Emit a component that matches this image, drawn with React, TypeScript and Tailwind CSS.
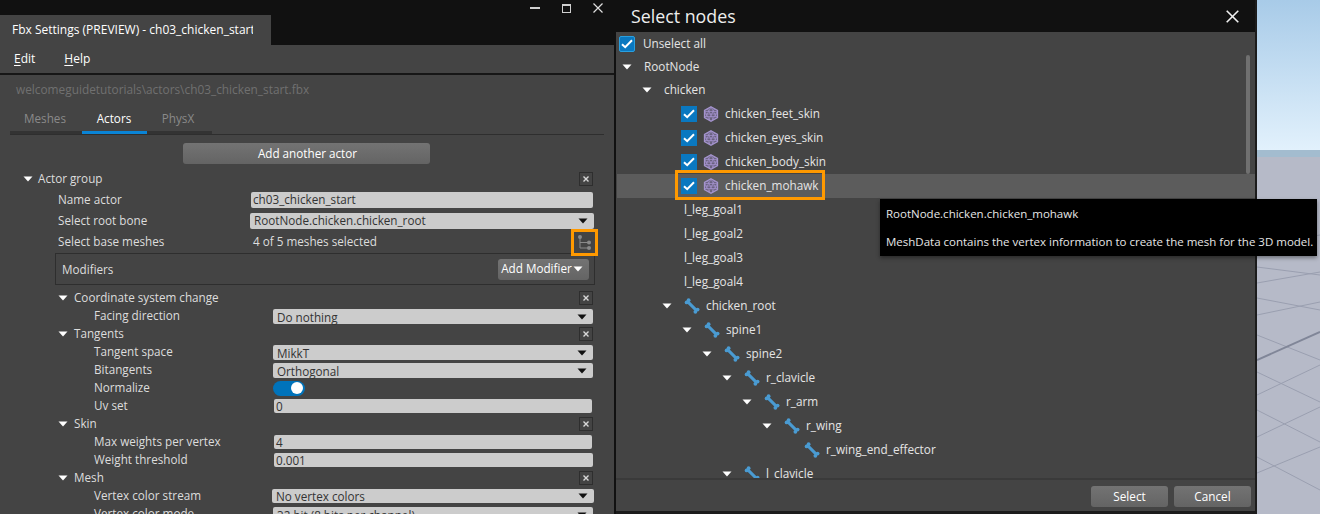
const FONT = "font-['Open_Sans',sans-serif]";

const Caret: React.FC<{ color?: string; className?: string }> = ({ color = "#ffffff", className }) => (
  <svg width="10" height="6" viewBox="0 0 10 6" className={`shrink-0 ${className ?? ""}`}>
    <path d="M0.5 0.5H9.5L5 5.5Z" fill={color} />
  </svg>
);

const SmallClose: React.FC = () => (
  <div className="flex h-[14px] w-[14px] shrink-0 items-center justify-center border border-[#2e2e2e] bg-[#444444]">
    <svg width="6" height="6" viewBox="0 0 6 6">
      <path d="M0.5 0.5L5.5 5.5M5.5 0.5L0.5 5.5" stroke="#d8d8d8" strokeWidth="1.4" />
    </svg>
  </div>
);

const Check: React.FC<{ className?: string }> = ({ className }) => (
  <div className={`flex h-4 w-4 shrink-0 items-center justify-center bg-[#0a78c0] ${className ?? ""}`}>
    <svg width="12" height="10" viewBox="0 0 12 10">
      <path d="M1 5.2L4.2 8.2L11 1.2" fill="none" stroke="#ffffff" strokeWidth="2" />
    </svg>
  </div>
);

const MeshIcon: React.FC = () => (
  <svg width="16" height="16" viewBox="0 0 16 16" className="shrink-0">
    <path d="M8 .8L14.5 4.4V11.6L8 15.2L1.5 11.6V4.4Z" fill="#6a6280" stroke="#a594cf" strokeWidth="1.3" />
    <path d="M1.5 5.5H14.5M1.5 8H14.5M1.5 10.5H14.5M4.5 2.8L10.5 14M8 1L13 10.5M2 6L7 14.5M11.5 2.8L5.5 14M8 1L3 10.5M14 6L9 14.5" fill="none" stroke="#a594cf" strokeWidth=".7" />
  </svg>
);

const BoneIcon: React.FC = () => (
  <svg width="16" height="16" viewBox="0 0 16 16" className="shrink-0">
    <path d="M3.6 3.6L12.4 12.4" stroke="#4a9bd2" strokeWidth="3" />
    <circle cx="2.6" cy="4.4" r="1.9" fill="#4a9bd2" />
    <circle cx="4.6" cy="2.2" r="1.9" fill="#4a9bd2" />
    <circle cx="11.4" cy="13.8" r="1.9" fill="#4a9bd2" />
    <circle cx="13.6" cy="11.6" r="1.9" fill="#4a9bd2" />
  </svg>
);

const TextField: React.FC<{ value: string; className: string }> = ({ value, className }) => (
  <div className={`flex items-center rounded-[2px] bg-[#cccccc] leading-[14px] text-[#333333] ${className}`}>
    {value}
  </div>
);

const SelectField: React.FC<{ value: string; className: string }> = ({ value, className }) => (
  <div className={`flex items-center justify-between rounded-[2px] bg-[#cccccc] pr-[6px] leading-[13px] text-[#333333] ${className}`}>
    <span>{value}</span>
    <Caret color="#111111" />
  </div>
);

const Section: React.FC<{ label: string }> = ({ label }) => (
  <div className="flex h-[18px] items-center pl-[58px] pr-[21px]">
    <Caret className="mr-[6px]" />
    <span className="flex-1">{label}</span>
    <SmallClose />
  </div>
);

const Prop: React.FC<{ label: string; children?: React.ReactNode }> = ({ label, children }) => (
  <div className="flex h-[18px] items-center pl-[94px] pr-[21px]">
    <span className="w-[179px] shrink-0">{label}</span>
    {children}
  </div>
);

const FbxSettings: React.FC = () => (
  <div className="flex h-full w-[614px] shrink-0 flex-col overflow-hidden bg-[#444444] text-[11.7px] text-[#dddddd]">
    <div className="relative h-[45px] shrink-0 bg-[#111111] pt-[15px]">
      <div className="flex h-[30px] w-[271px] items-center bg-[#444444] pl-[12px] text-[12px] text-white">
        <span className="w-[241px] overflow-hidden whitespace-nowrap">Fbx Settings (PREVIEW) - ch03_chicken_start</span>
      </div>
      <div className="absolute right-[11px] top-[3px] flex items-center gap-[22px]">
        <div className="h-[2px] w-[10px] bg-[#d0d0d0]" />
        <div className="h-[9px] w-[9px] border border-t-2 border-[#d0d0d0]" />
        <svg width="10" height="10" viewBox="0 0 10 10">
          <path d="M.5 .5L9.5 9.5M9.5 .5L.5 9.5" stroke="#e0e0e0" strokeWidth="1.2" />
        </svg>
      </div>
    </div>
    <div className="box-content flex h-[28px] shrink-0 items-center gap-[29px] border-b-2 border-[#161616] pl-[14px] text-[12px] text-white">
      <span><span className="underline underline-offset-2">E</span>dit</span>
      <span><span className="underline underline-offset-2">H</span>elp</span>
    </div>
    <div className="flex h-[30px] shrink-0 items-center pl-[16px] text-[11.85px] text-[#707070]">welcomeguidetutorials\actors\ch03_chicken_start.fbx</div>
    <div className="mx-[10px] h-[30px] shrink-0 border-b border-[#2e2e2e]">
      <div className="flex h-[29px] w-[202px] border-b-[3px] border-[#333333]">
        <div className="flex w-[70px] items-center justify-center pt-px text-[#8a8a8a]">Meshes</div>
        <div className="-mb-[3px] ml-[2px] flex w-[65px] items-center justify-center border-b-[3px] border-[#0a84d6] pr-px pt-px text-white">Actors</div>
        <div className="flex w-[65px] items-center justify-center pr-[3px] pt-px text-[#8a8a8a]">PhysX</div>
      </div>
    </div>
    <div className="flex shrink-0 justify-center pr-[2px] pt-[8px]">
      <div className="flex h-[21px] w-[247px] items-center justify-center rounded-[3px] bg-gradient-to-b from-[#737373] to-[#646464] pl-[3px] text-white">Add another actor</div>
    </div>
    <div className="flex h-[25px] shrink-0 items-center pl-[23px] pr-[21px] pt-[4px]">
      <Caret className="mr-[5px]" />
      <span className="flex-1">Actor group</span>
      <SmallClose />
    </div>
    <div className="flex h-[21px] shrink-0 items-center pl-[58px] pr-[21px]">
      <span className="w-[193px] shrink-0">Name actor</span>
      <TextField value="ch03_chicken_start" className="h-[16px] flex-1 pb-px pl-[2px]" />
    </div>
    <div className="flex h-[21px] shrink-0 items-center pl-[58px] pr-[20px]">
      <span className="w-[192px] shrink-0">Select root bone</span>
      <SelectField value="RootNode.chicken.chicken_root" className="h-[16px] flex-1 pl-[4px]" />
    </div>
    <div className="relative flex h-[21px] shrink-0 items-center pl-[58px] pr-[22px]">
      <span className="w-[195px] shrink-0">Select base meshes</span>
      <span>4 of 5 meshes selected</span>
      <div className="absolute left-[571px] top-[-2px] flex h-[27px] w-[27px] items-center justify-center border-[3px] border-[#ff9900]">
        <svg width="14" height="15" viewBox="0 0 14 15">
          <path d="M2 2V13H10M2 7.5H10" fill="none" stroke="#8a8a8a" />
          <circle cx="2" cy="2" r="2" fill="#8a8a8a" />
          <circle cx="11" cy="7.5" r="2" fill="#8a8a8a" />
          <circle cx="11" cy="13" r="2" fill="#8a8a8a" />
        </svg>
      </div>
    </div>
    <div className="ml-[55px] mr-[19px] mt-px flex h-[32px] shrink-0 items-center justify-between border border-[#2e2e2e] pl-[6px] pr-[5px]">
      <span className="pt-px">Modifiers</span>
      <div className="flex h-[21px] w-[91px] items-center justify-center gap-[1px] rounded-[3px] bg-gradient-to-b from-[#737373] to-[#646464] pr-[3px] text-white">
        Add Modifier<Caret />
      </div>
    </div>
    <div className="mt-[4px] flex flex-col">
      <Section label="Coordinate system change" />
      <Prop label="Facing direction">
        <SelectField value="Do nothing" className="h-[15px] flex-1 pl-[4px] pt-[2px]" />
      </Prop>
      <Section label="Tangents" />
      <Prop label="Tangent space">
        <SelectField value="MikkT" className="h-[15px] flex-1 pl-[4px] pt-[2px]" />
      </Prop>
      <Prop label="Bitangents">
        <SelectField value="Orthogonal" className="h-[15px] flex-1 pl-[4px] pt-[2px]" />
      </Prop>
      <Prop label="Normalize">
        <div className="flex h-[15px] w-[32px] items-center justify-end rounded-full bg-[#0073bb] pr-[2px]">
          <div className="h-[12px] w-[12px] rounded-full bg-white" />
        </div>
      </Prop>
      <Prop label="Uv set">
        <TextField value="0" className="mx-px h-[14px] flex-1 pl-[2px]" />
      </Prop>
      <Section label="Skin" />
      <Prop label="Max weights per vertex">
        <TextField value="4" className="mx-px h-[14px] flex-1 pl-[2px]" />
      </Prop>
      <Prop label="Weight threshold">
        <TextField value="0.001" className="ml-px h-[14px] flex-1 pl-[2px]" />
      </Prop>
      <Section label="Mesh" />
      <Prop label="Vertex color stream">
        <SelectField value="No vertex colors" className="-mx-px h-[14px] flex-1 pl-[4px]" />
      </Prop>
      <Prop label="Vertex color mode">
        <SelectField value="32 bit (8 bits per channel)" className="h-[15px] flex-1 pl-[4px] pt-[2px]" />
      </Prop>
    </div>
  </div>
);

type TreeRow = { label: string; indent: string; kind: "arrow" | "mesh" | "bone" | "bonearrow" | "plain"; height?: string };

const treeRows: TreeRow[] = [
  { label: "RootNode", indent: "pl-[5px]", kind: "arrow", height: "h-[23px]" },
  { label: "chicken", indent: "pl-[25px]", kind: "arrow" },
  { label: "chicken_feet_skin", indent: "pl-[64px]", kind: "mesh" },
  { label: "chicken_eyes_skin", indent: "pl-[64px]", kind: "mesh" },
  { label: "chicken_body_skin", indent: "pl-[64px]", kind: "mesh" },
  { label: "chicken_mohawk", indent: "pl-[64px]", kind: "mesh" },
  { label: "l_leg_goal1", indent: "pl-[67px]", kind: "plain" },
  { label: "l_leg_goal2", indent: "pl-[67px]", kind: "plain" },
  { label: "l_leg_goal3", indent: "pl-[67px]", kind: "plain" },
  { label: "l_leg_goal4", indent: "pl-[67px]", kind: "plain" },
  { label: "chicken_root", indent: "pl-[45px]", kind: "bonearrow" },
  { label: "spine1", indent: "pl-[65px]", kind: "bonearrow" },
  { label: "spine2", indent: "pl-[85px]", kind: "bonearrow" },
  { label: "r_clavicle", indent: "pl-[105px]", kind: "bonearrow" },
  { label: "r_arm", indent: "pl-[125px]", kind: "bonearrow" },
  { label: "r_wing", indent: "pl-[145px]", kind: "bonearrow" },
  { label: "r_wing_end_effector", indent: "pl-[187px]", kind: "bone" },
  { label: "l_clavicle", indent: "pl-[105px]", kind: "bonearrow" },
];

const Row: React.FC<{ row: TreeRow }> = ({ row }) => (
  <div className={`flex ${row.height ?? "h-[24px]"} shrink-0 items-center ${row.indent} ${row.label === "chicken_mohawk" ? "bg-[#5c5c5c]" : ""}`}>
    {(row.kind === "arrow" || row.kind === "bonearrow") && <Caret className="mr-[12px]" />}
    {row.kind === "mesh" && <Check className="mr-[6px]" />}
    {row.kind === "mesh" && <MeshIcon />}
    {(row.kind === "bone" || row.kind === "bonearrow") && <BoneIcon />}
    <span className={row.kind === "arrow" || row.kind === "plain" ? "" : "ml-[6px]"}>{row.label}</span>
  </div>
);

const SelectNodes: React.FC = () => (
  <div className="flex h-full w-[641px] shrink-0 flex-col overflow-hidden border-r-2 border-[#1c1c1c] bg-[#444444] text-[11.75px] text-[#e4e4e4]">
    <div className="flex h-[32px] shrink-0 items-center justify-between bg-[#111111] pl-[15px] pr-[16px] pt-px text-[17.8px] text-[#eeeeee]">
      <span>Select nodes</span>
      <svg width="13" height="13" viewBox="0 0 13 13" className="-mt-px">
        <path d="M.7 .7L12.3 12.3M12.3 .7L.7 12.3" stroke="#f0f0f0" strokeWidth="1.6" />
      </svg>
    </div>
    <div className="relative h-[446px] shrink-0 overflow-hidden pl-[1px]">
      <div className="absolute right-[5px] top-[23px] h-[119px] w-[4px] rounded-full bg-[#707070]" />
      <div className="flex h-[23px] items-center pl-[2px]">
        <Check className="mr-[8px] rounded-[2px] border border-[#29a0e0]" />
        Unselect all
      </div>
      {treeRows.map((row) => <Row key={row.label} row={row} />)}
      <div className="absolute left-[59px] top-[138px] h-[30px] w-[150px] border-[3px] border-[#ff9900]" />
    </div>
    <div className="flex flex-1 items-start justify-end gap-[6px] border-t-2 border-[#3a3a3a] pr-[4px] pt-[6px]">
      <div className="flex h-[21px] w-[77px] items-center justify-center rounded-[3px] bg-gradient-to-b from-[#737373] to-[#646464] text-white">Select</div>
      <div className="flex h-[21px] w-[77px] items-center justify-center rounded-[3px] bg-gradient-to-b from-[#737373] to-[#646464] text-white">Cancel</div>
    </div>
    <div className="h-[3px] shrink-0 bg-[#1c1c1c]" />
  </div>
);

const Viewport: React.FC = () => (
  <div className="flex h-full flex-1 flex-col overflow-hidden">
    <div className="h-[150px] bg-gradient-to-b from-[#a8cbe8] to-[#e2f1fc]" />
    <div className="h-[7px] bg-[#a3bccf]" />
    <svg className="flex-1 bg-[#b6bac8]" width="63" height="357" viewBox="0 0 63 357" preserveAspectRatio="none">
      <g fill="none" stroke="#9a9fb0" strokeWidth="1">
        <path d="M0 88L63 78M0 126L63 115M0 158L63 145M0 238L63 208M0 280L63 250M0 316L63 290" />
        <path d="M0 110L63 118M0 141L63 153M0 178L63 203M0 215L63 245M0 253L63 285M0 300L63 333" />
      </g>
      <path d="M0 203L63 175" fill="none" stroke="#808698" strokeWidth="2" />
    </svg>
  </div>
);

export default function App() {
  return (
    <div className={`relative flex h-[514px] w-[1320px] overflow-hidden bg-[#111111] ${FONT}`}>
      <FbxSettings />
      <div className="w-[2px] shrink-0 bg-[#111111]" />
      <SelectNodes />
      <Viewport />
      <div className="absolute left-[880px] top-[199px] flex h-[57px] w-[437px] flex-col justify-center gap-[10px] bg-black pl-[6px] text-[11.5px] text-[#e6e6e6] shadow-[0_2px_4px_rgba(0,0,0,0.4)]">
        <div>RootNode.chicken.chicken_mohawk</div>
        <div>MeshData contains the vertex information to create the mesh for the 3D model.</div>
      </div>
    </div>
  );
}
